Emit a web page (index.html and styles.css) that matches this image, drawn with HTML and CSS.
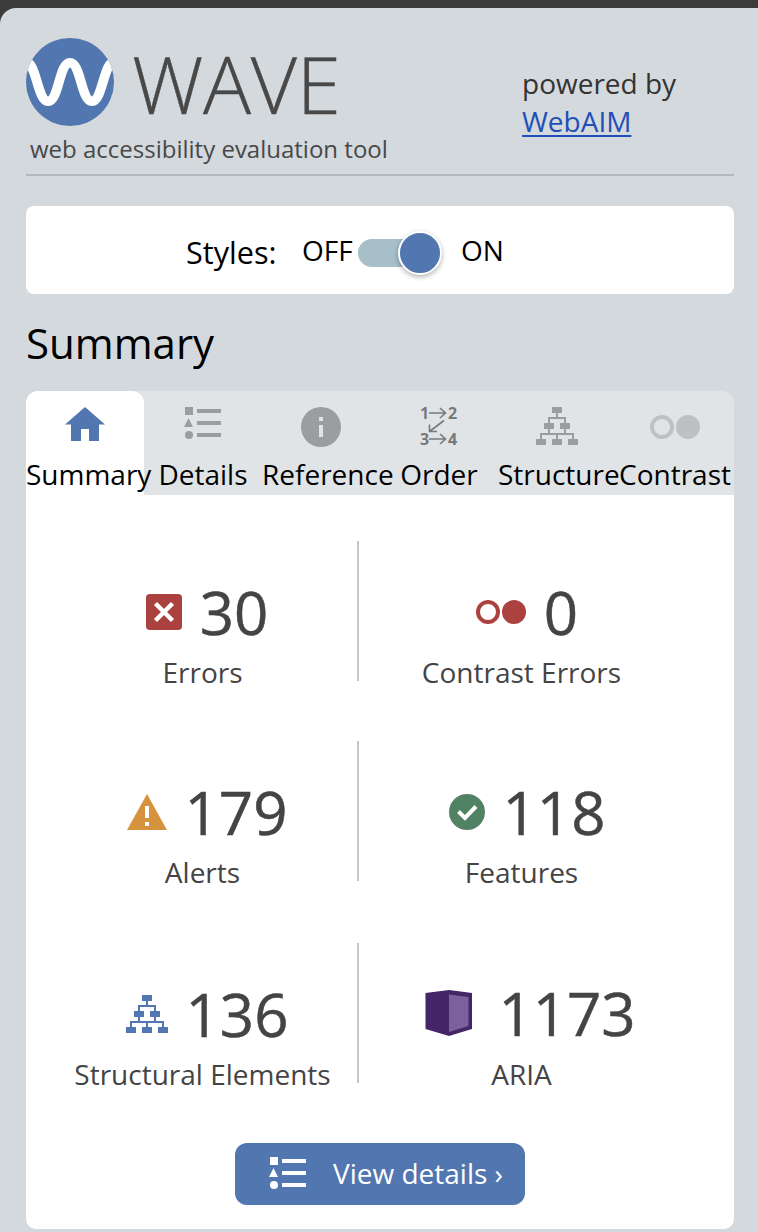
FILE: index.html
```html
<!DOCTYPE html>
<html lang="en">
<head>
<meta charset="utf-8">
<title>WAVE</title>
<link rel="stylesheet" href="styles.css">
</head>
<body>
<svg class="defs" width="0" height="0" aria-hidden="true">
  <symbol id="list" viewBox="0 0 37 32">
    <path d="M1 0h8v8H1zM4.500 11l4.500 9H0zM13 2h24v4H13zM13 14h24v4H13zM13 26h24v4H13z"/>
    <circle cx="5" cy="28" r="4"/>
  </symbol>
  <symbol id="tree" viewBox="0 0 42 38">
    <path d="M16 0h10v6H16zM8 16h10v6H8zM24 16h10v6H24zM0 32h10v6H0zM16 32h10v6H16zM32 32h10v6H32z"/>
    <path d="M21 6v5M13 16v-5h16v5M13 22v5M29 22v5M5 32v-5h32v5M21 27v5" fill="none" stroke="currentColor" stroke-width="2"/>
  </symbol>
  <symbol id="circles" viewBox="0 0 50 24">
    <circle cx="12" cy="12" r="10" fill="none" stroke="currentColor" stroke-width="4"/>
    <circle cx="38" cy="12" r="12"/>
  </symbol>
</svg>
<div class="panel">
  <header class="header">
    <div class="brand">
      <div class="logo">
        <svg width="88" height="88" viewBox="0 0 88 88">
          <defs><clipPath id="disc"><circle cx="44" cy="44" r="44"/></clipPath></defs>
          <circle cx="44" cy="44" r="44" fill="#5276b0"/>
          <path clip-path="url(#disc)" d="M-1 25C10 20 11 63.200 22 63.200C33 63.200 33 24.800 44 24.800C55 24.800 55 63.200 66 63.200C77 63.200 78 20 89 25" fill="none" stroke="#fff" stroke-width="9.600"/>
        </svg>
        <span class="name">WAVE</span>
      </div>
      <div class="tagline">web accessibility evaluation tool</div>
    </div>
    <div class="powered">powered by<br><a href="#">WebAIM</a></div>
  </header>

  <div class="styles">
    <span class="styles-label">Styles:</span>
    <span class="off">OFF</span>
    <span class="switch"><span class="knob"></span></span>
    <span class="on">ON</span>
  </div>

  <h2 class="title">Summary</h2>

  <nav class="tabs">
    <div class="tab active"><div class="tab-icon"><svg width="40" height="34" viewBox="0 0 40 34"><path d="M20 0L40 17.500H34V34H24V22H16V34H6V17.500H0z"/></svg></div><span>Summary</span></div>
    <div class="tab"><div class="tab-icon list"><svg width="37" height="32"><use href="#list"/></svg></div><span>Details</span></div>
    <div class="tab"><div class="tab-icon"><svg width="40" height="40" viewBox="0 0 40 40"><circle cx="20" cy="20" r="20"/><path d="M18 10h4v4h-4zM18 18h4v12h-4z" fill="#e0e4e7"/></svg></div><span>Reference</span></div>
    <div class="tab"><div class="tab-icon order"><svg width="46" height="48" viewBox="-4 -4 46 48">
      <g class="digits"><text x="0" y="12">1</text><text x="28" y="12">2</text><text x="0" y="38">3</text><text x="28" y="38">4</text></g>
      <path d="M9 6H25.500M20 1l5.500 5L20 11M9 32H25.500M20 27l5.500 5L20 37M24 13.500L9.500 24.500M9.500 17.500v7h7.500" fill="none" stroke="currentColor" stroke-width="1.600"/>
    </svg></div><span>Order</span></div>
    <div class="tab"><div class="tab-icon"><svg width="42" height="38"><use href="#tree"/></svg></div><span>Structure</span></div>
    <div class="tab"><div class="tab-icon contrast"><svg width="50" height="24"><use href="#circles"/></svg></div><span>Contrast</span></div>
  </nav>

  <main class="content">
    <div class="row">
      <div class="stat left">
        <div class="figure red"><svg width="36" height="36" viewBox="0 0 36 36"><rect width="36" height="36" rx="4"/><path d="M9.500 9.500l17 17M26.500 9.500l-17 17" stroke="#fff" stroke-width="4.500"/></svg><span>30</span></div>
        <div class="label">Errors</div>
      </div>
      <div class="rule"></div>
      <div class="stat right">
        <div class="figure red"><svg width="50" height="24"><use href="#circles"/></svg><span>0</span></div>
        <div class="label">Contrast Errors</div>
      </div>
    </div>
    <div class="row">
      <div class="stat left">
        <div class="figure amber"><svg width="40" height="36" viewBox="0 0 40 36"><path d="M20 0l20 36H0z"/><path d="M18 12h4v12h-4zM18 28h4v4h-4z" fill="#fff"/></svg><span>179</span></div>
        <div class="label">Alerts</div>
      </div>
      <div class="rule"></div>
      <div class="stat right">
        <div class="figure green"><svg width="36" height="36" viewBox="0 0 36 36"><circle cx="18" cy="18" r="18"/><path d="M9.500 17.500l6.500 6.500L27 12.500" fill="none" stroke="#fff" stroke-width="4"/></svg><span>118</span></div>
        <div class="label">Features</div>
      </div>
    </div>
    <div class="row last">
      <div class="stat left">
        <div class="figure blue"><svg width="42" height="38"><use href="#tree"/></svg><span>136</span></div>
        <div class="label">Structural Elements</div>
      </div>
      <div class="rule"></div>
      <div class="stat right">
        <div class="figure aria"><svg width="48" height="46" viewBox="0 0 48 46"><path d="M.500 3L24 0l23 3v36L24 46 .500 39z" fill="#432568"/><path d="M24 4.500L43.500 7v29L24 42z" fill="#7c609d"/></svg><span>1173</span></div>
        <div class="label">ARIA</div>
      </div>
    </div>
    <button class="view"><svg width="37" height="32"><use href="#list"/></svg><span>View details ›</span></button>
  </main>
</div>
</body>
</html>
```
FILE: styles.css
```css
* { box-sizing: border-box; }
html { background: #3b3b3b; }
body {
  margin: 0;
  padding-top: 8px;
  font-family: "Open Sans", "Noto Sans", sans-serif;
  font-size: 28px;
  color: #000;
}
svg { display: block; flex: none; fill: currentColor; }
.defs { position: absolute; }
.panel {
  height: 1224px;
  padding: 30px 24px 0 26px;
  border-top-left-radius: 16px;
  background: #d4d9dd;
  overflow: hidden;
}
.header {
  display: flex;
  height: 138px;
  border-bottom: 2px solid #b2b8bb;
}
.brand { width: 496px; }
.logo { display: flex; height: 88px; }
.name {
  margin-left: 18px;
  font-size: 80px;
  font-weight: 300;
  line-height: 90px;
  letter-spacing: -.3px;
  color: #484848;
  -webkit-text-stroke: .4px #484848;
}
.tagline {
  margin: 7px 0 0 4px;
  font-size: 24px;
  line-height: 32px;
  color: #484848;
  white-space: nowrap;
}
.powered {
  padding-top: 26px;
  line-height: 38px;
  color: #333;
  white-space: nowrap;
}
.powered a {
  color: #214fb8;
  text-decoration-thickness: 2px;
  text-underline-offset: 3px;
}
.styles {
  display: flex;
  align-items: center;
  height: 88px;
  margin-top: 30px;
  padding-left: 160px;
  border-radius: 8px;
  background: #fff;
  line-height: 40px;
  white-space: nowrap;
}
.styles-label { width: 116px; padding-top: 3px; font-size: 30.6px; }
.off { width: 56px; }
.switch {
  display: flex;
  justify-content: flex-end;
  align-items: center;
  width: 84px;
  height: 28px;
  margin-top: 6px;
  border-radius: 14px;
  background: #a6bfc9;
}
.knob {
  flex: none;
  width: 44px;
  height: 44px;
  border: 2px solid #fff;
  border-radius: 50%;
  background: #5276b0;
  box-shadow: 0 2px 5px rgba(0, 0, 0, .3);
}
.on { margin-left: 19px; }
.title {
  margin: 19px 0 18px;
  font-size: 42px;
  font-weight: 400;
  line-height: 60px;
}
.tabs {
  display: grid;
  grid-template-columns: repeat(6, 118px);
  height: 104px;
  border-radius: 12px 12px 0 0;
  background: #e0e4e7;
}
.tab {
  height: 104px;
  border-radius: 12px 12px 0 0;
  line-height: 40px;
  text-align: center;
  white-space: nowrap;
}
.tab.active { background: #fff; }
.tab-icon {
  display: flex;
  justify-content: center;
  height: 63px;
  padding-top: 16px;
  color: #9b9ea1;
}
.active .tab-icon { color: #5276b0; }
.list { padding-right: 2px; }
.order { padding-top: 12px; color: #77797b; }
.digits { font-size: 16px; font-weight: 700; }
.contrast { padding-top: 24px; color: #bfc0c3; }
.content {
  height: 734px;
  padding: 46px 0 0 20px;
  border-radius: 0 0 10px 10px;
  background: #fff;
  color: #444;
}
.row { display: flex; height: 200px; }
.row + .row { height: 202px; }
.row.last { height: 200px; }
.rule { width: 2px; height: 140px; background: #c8c8c8; }
.stat { padding-top: 41px; text-align: center; }
.left { width: 311px; padding-left: 1px; }
.left .label { margin-right: -1px; }
.right { width: 325px; }
.figure {
  display: flex;
  justify-content: center;
  align-items: center;
  gap: 18px;
  height: 60px;
  padding-left: 11px;
  line-height: 60px;
}
.left .figure { padding-left: 10px; }
.figure span {
  font-size: 60px;
  color: #444;
  -webkit-text-stroke: .5px #444;
}
.label { margin-top: 10px; line-height: 40px; white-space: nowrap; }
.red { color: #ab4240; }
.amber { color: #d6933d; }
.green { color: #528264; }
.blue { color: #5276b0; }
.figure.aria { gap: 25px; height: 58px; padding-left: 18px; margin-bottom: 12px; }
.view {
  display: flex;
  align-items: center;
  width: 290px;
  height: 62px;
  margin: 0 0 0 189px;
  padding: 0 0 2px 34px;
  border: 0;
  border-radius: 12px;
  background: #5276b0;
  color: #fff;
  font: 400 28px/40px "Open Sans", "Noto Sans", sans-serif;
  white-space: nowrap;
}
.view span { margin-left: 27px; }
```
